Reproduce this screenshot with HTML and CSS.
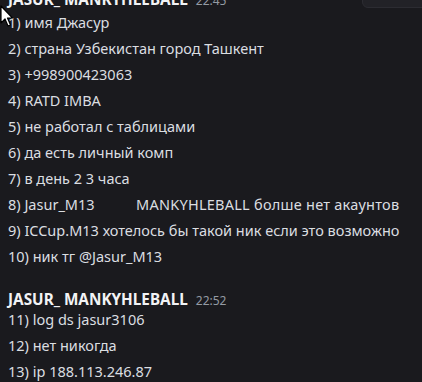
FILE: index.html
```html
<!DOCTYPE html>
<html lang="ru">
<head>
<meta charset="utf-8">
<link rel="stylesheet" href="styles.css">
</head>
<body>
<div class="chat">
  <div class="group first">
    <div class="header"><span class="name">JASUR_ MANKYHLEBALL</span><span class="time">22:45</span></div>
    <div class="msg">1) имя Джасур</div>
    <div class="msg">2) страна Узбекистан город Ташкент</div>
    <div class="msg">3) +998900423063</div>
    <div class="msg">4) RATD IMBA</div>
    <div class="msg">5) не работал с таблицами</div>
    <div class="msg">6) да есть личный комп</div>
    <div class="msg">7) в день 2 3 часа</div>
    <div class="msg">8) Jasur_M13           <span class="wide">MANKYHLEBALL болше нет акаунтов</span></div>
    <div class="msg">9) ICCup.M13 хотелось бы такой ник если это возможно</div>
    <div class="msg">10) ник тг @Jasur_M13</div>
  </div>
  <div class="group second">
    <div class="header"><span class="name">JASUR_ MANKYHLEBALL</span><span class="time">22:52</span></div>
    <div class="msg">11) log ds jasur3106</div>
    <div class="msg">12) нет никогда</div>
    <div class="msg">13) ip 188.113.246.87</div>
  </div>
</div>
<div class="toolbar"></div>
<svg class="cursor" width="14" height="24" viewBox="0 0 14 24"><path d="M1 1 L1 18 L5 14 L8 21 L10.5 20 L7.5 13 L12.5 13 Z" fill="#fff" stroke="#000" stroke-width="1.2" stroke-linejoin="round"/></svg>
</body>
</html>
```
FILE: styles.css
```css
html, body {
  margin: 0;
  padding: 0;
  background: #1a1a1e;
  width: 422px;
  height: 382px;
  overflow: hidden;
}
body {
  position: relative;
  font-family: "Noto Sans", "Open Sans", sans-serif;
  color: #dbdee1;
}
.chat {
  padding-left: 8px;
}
.group.first {
  margin-top: -11px;
}
.group.second {
  margin-top: 20px;
}
.header {
  height: 20px;
  line-height: 20px;
  white-space: nowrap;
}
.second .header {
  height: 17px;
}
.name {
  font-size: 15.3px;
  font-weight: 700;
  color: #f2f3f5;
}
.time {
  font-size: 12px;
  color: #949ba4;
  margin-left: 8px;
}
.msg {
  height: 26px;
  line-height: 26px;
  font-size: 14.5px;
  white-space: pre;
}
.wide {
  letter-spacing: 0.25px;
}
.toolbar {
  position: absolute;
  right: -6px;
  top: -10px;
  width: 64px;
  height: 16px;
  background: #222227;
  border: 1px solid #2c2c32;
  border-radius: 6px;
}
.cursor {
  position: absolute;
  left: 0;
  top: 5px;
}
```
